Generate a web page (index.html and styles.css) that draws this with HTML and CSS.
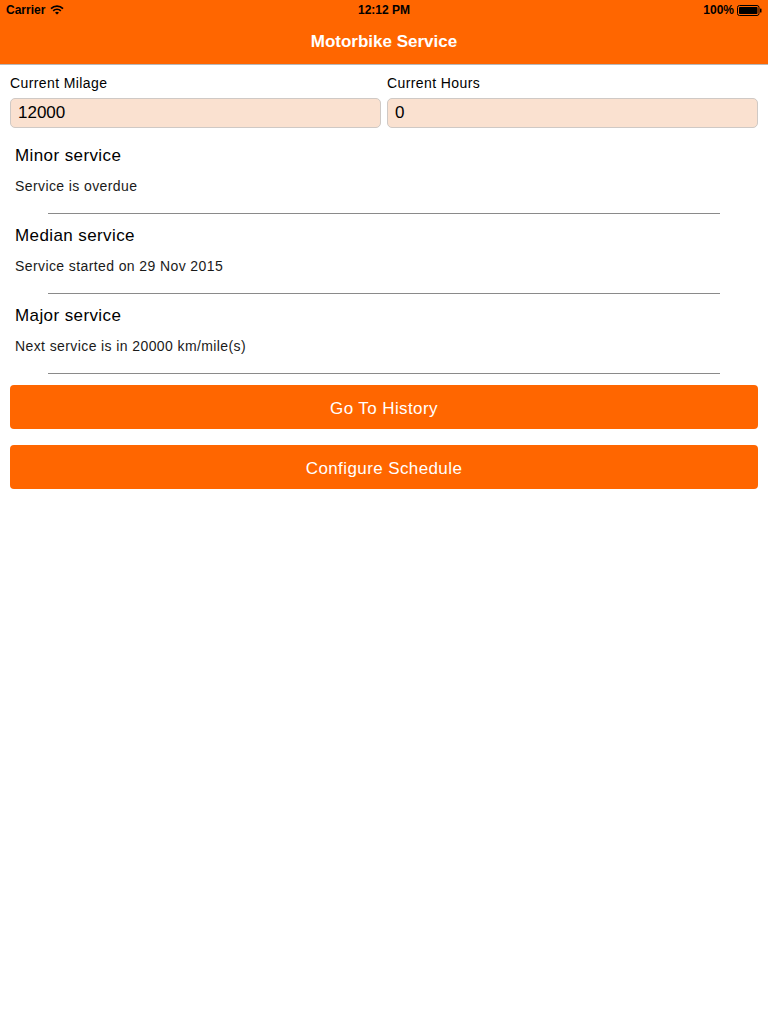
FILE: index.html
```html
<!DOCTYPE html>
<html>
<head>
<meta charset="utf-8">
<link rel="stylesheet" href="styles.css">
</head>
<body>
<div class="statusbar">
  <div class="sb-left">Carrier
    <svg class="wifi" width="14" height="10" viewBox="0 0 14 10">
      <path d="M1 3.6 A8.5 8.5 0 0 1 13 3.6" fill="none" stroke="#000" stroke-width="1.7"/>
      <path d="M3.2 5.8 A5.4 5.4 0 0 1 10.8 5.8" fill="none" stroke="#000" stroke-width="1.7"/>
      <path d="M7 9.6 L5 7.8 A2.8 2.8 0 0 1 9 7.8 Z" fill="#000"/>
    </svg>
  </div>
  <div class="sb-center">12:12 PM</div>
  <div class="sb-right">100%
    <svg class="battery" width="25" height="11" viewBox="0 0 25 11">
      <rect x="0.5" y="0.5" width="21.5" height="10" rx="2" fill="none" stroke="#000" stroke-width="1"/>
      <rect x="2" y="2" width="18.5" height="7" rx="0.8" fill="#000"/>
      <rect x="23" y="3.5" width="1.5" height="4" rx="0.6" fill="#000"/>
    </svg>
  </div>
</div>
<div class="navbar">Motorbike Service</div>
<main class="content">
  <div class="fields">
    <div class="field">
      <div class="label">Current Milage</div>
      <div class="input">12000</div>
    </div>
    <div class="field">
      <div class="label">Current Hours</div>
      <div class="input">0</div>
    </div>
  </div>
  <div class="services">
    <div class="service">
      <div class="s-title">Minor service</div>
      <div class="s-sub">Service is overdue</div>
      <div class="sep"></div>
    </div>
    <div class="service">
      <div class="s-title">Median service</div>
      <div class="s-sub">Service started on 29 Nov 2015</div>
      <div class="sep"></div>
    </div>
    <div class="service">
      <div class="s-title">Major service</div>
      <div class="s-sub">Next service is in 20000 km/mile(s)</div>
      <div class="sep"></div>
    </div>
  </div>
  <div class="buttons">
    <div class="btn">Go To History</div>
    <div class="btn">Configure Schedule</div>
  </div>
</main>
</body>
</html>
```
FILE: styles.css
```css
html, body {
  margin: 0;
  padding: 0;
  background: #ffffff;
  font-family: "Liberation Sans", Arial, sans-serif;
  color: #000;
}
.statusbar {
  height: 20px;
  background: #ff6600;
  display: flex;
  align-items: center;
  justify-content: space-between;
  padding: 0 6px;
  font-size: 12px;
  font-weight: bold;
  position: relative;
}
.sb-left, .sb-right {
  display: flex;
  align-items: center;
  gap: 5px;
}
.sb-right { gap: 3px; }
.sb-center {
  position: absolute;
  left: 0;
  right: 0;
  text-align: center;
  pointer-events: none;
}
.navbar {
  height: 44px;
  background: #ff6600;
  color: #fff;
  font-size: 17px;
  font-weight: bold;
  display: flex;
  align-items: center;
  justify-content: center;
  border-bottom: 1px solid #b8b8b8;
}
.content {
  padding: 7px 10px 0;
}
.fields {
  display: grid;
  grid-template-columns: 1fr 1fr;
  gap: 6px;
}
.label {
  font-size: 14px;
  line-height: 20px;
  padding-top: 1px;
  margin-bottom: 5px;
  letter-spacing: 0.4px;
}
.input {
  height: 30px;
  box-sizing: border-box;
  background: #fae1d0;
  border: 1px solid #cfc9c5;
  border-radius: 5px;
  font-size: 17px;
  line-height: 28px;
  padding: 0 7px;
}
.services {
  margin-top: 6px;
}
.service {
  padding-top: 11px;
}
.s-title {
  font-size: 17px;
  line-height: 20px;
  padding-top: 1px;
  padding-left: 5px;
  letter-spacing: 0.4px;
}
.s-sub {
  font-size: 14px;
  line-height: 20px;
  margin-top: 10px;
  padding-left: 5px;
  color: #1a1a1a;
  letter-spacing: 0.4px;
}
.sep {
  height: 1px;
  background: #8a8a8a;
  margin: 17px 38px 0 38px;
}
.buttons {
  margin-top: 11px;
  display: flex;
  flex-direction: column;
  gap: 16px;
}
.btn {
  height: 44px;
  box-sizing: border-box;
  padding-top: 3px;
  background: #ff6600;
  border-radius: 4px;
  color: #fff;
  font-size: 17px;
  letter-spacing: 0.4px;
  display: flex;
  align-items: center;
  justify-content: center;
}
```
